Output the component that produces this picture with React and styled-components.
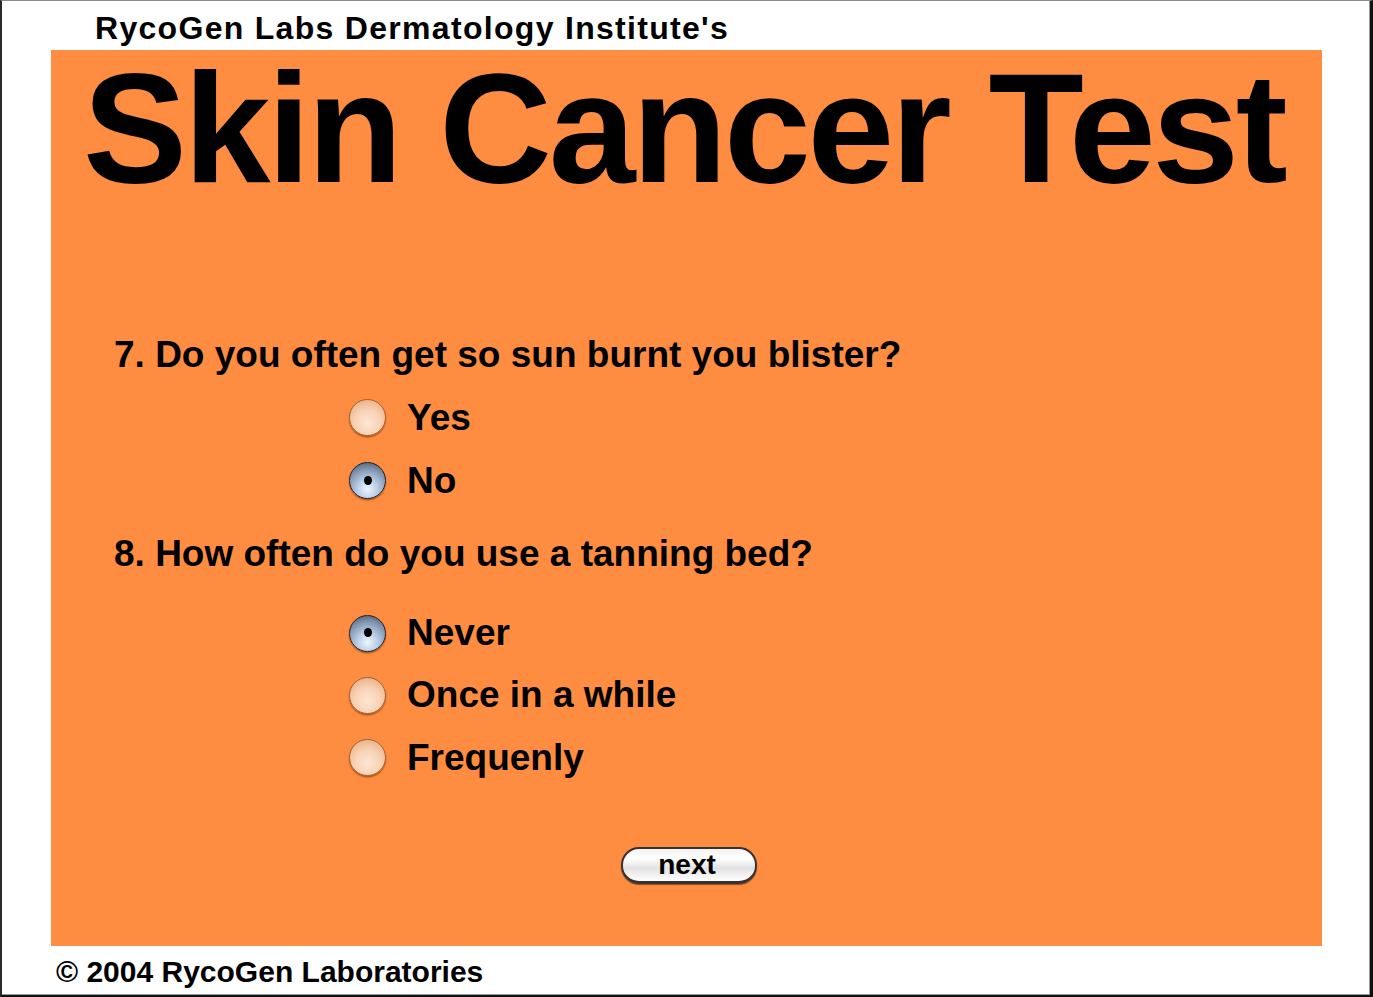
import React from "react";
import styled, { createGlobalStyle } from "styled-components";

const Global = createGlobalStyle`
  html, body { margin: 0; padding: 0; background: #fff; }
  body { font-family: "Liberation Sans", Arial, Helvetica, sans-serif; }
`;

const Frame = styled.div`
  box-sizing: border-box;
  width: 1373px;
  height: 997px;
  border-left: 2px solid #2a2a2a;
  border-top: 1px solid #8a8a8a;
  border-right: 3px solid #111;
  border-bottom: 2px solid #111;
  box-shadow: inset -1px -1px 0 #9a9a9a;
  display: flex;
  flex-direction: column;
  background: #fff;
`;

const Header = styled.div`
  box-sizing: border-box;
  height: 49px;
  padding: 0 0 6px 93px;
  display: flex;
  align-items: flex-end;
  font-weight: bold;
  font-size: 32px;
  line-height: 32px;
  color: #000;
  white-space: nowrap;
  letter-spacing: 1.3px;
`;

const Panel = styled.div`
  margin-left: 49px;
  width: 1271px;
  height: 896px;
  background: #fe8d41;
  display: flex;
  flex-direction: column;
`;

const Title = styled.h1`
  margin: 0;
  padding-left: 32px;
  font-size: 156px;
  line-height: 156px;
  font-weight: bold;
  letter-spacing: -3.3px;
  color: #000;
  white-space: nowrap;
`;

const Question = styled.div`
  margin-top: ${(p) => p.$top}px;
  padding-left: 63px;
  font-size: 37px;
  line-height: 40px;
  font-weight: bold;
  color: #000;
  white-space: nowrap;
`;

const Options = styled.div`
  margin-top: ${(p) => p.$top}px;
  padding-left: 298px;
  display: flex;
  flex-direction: column;
`;

const OptionRow = styled.label`
  height: ${(p) => p.$h}px;
  display: flex;
  align-items: center;
  gap: 21px;
  font-size: 37px;
  font-weight: bold;
  color: #000;
`;

const RadioDot = styled.span`
  box-sizing: border-box;
  width: 37px;
  height: 37px;
  border-radius: 50%;
  flex-shrink: 0;
  position: relative;
  border: 1.5px solid ${(p) => (p.$checked ? "#20242e" : "#a8612f")};
  background: ${(p) =>
    p.$checked
      ? "radial-gradient(circle at 50% 75%, #eef6ff 0%, #bcd0e8 30%, #8195b0 65%, #3e4658 100%)"
      : "radial-gradient(circle at 50% 65%, #fde6d4 0%, #f8d2b5 45%, #eab48b 80%, #b97344 100%)"};
  box-shadow: 0 1.5px 1.5px rgba(90, 40, 0, 0.55);
  &::after {
    content: "";
    display: ${(p) => (p.$checked ? "block" : "none")};
    position: absolute;
    left: 50%;
    top: 50%;
    width: 8px;
    height: 9px;
    margin: -5px 0 0 -4px;
    border-radius: 50%;
    background: #000;
  }
`;

const ButtonRow = styled.div`
  margin-top: ${(p) => p.$top}px;
  display: flex;
  padding-left: 570px;
`;

const NextButton = styled.button`
  box-sizing: border-box;
  width: 136px;
  height: 37px;
  border-radius: 18px;
  border: 2px solid #3a3230;
  border-bottom-width: 3px;
  background: linear-gradient(#f2f2f2 0%, #ffffff 30%, #e2e2e2 60%, #ffffff 100%);
  box-shadow: 0 1px 1px rgba(80, 30, 0, 0.6);
  font-family: "Liberation Sans", Arial, sans-serif;
  font-weight: bold;
  font-size: 28px;
  line-height: 30px;
  color: #000;
  padding: 0 4px 0 0;
  cursor: pointer;
`;

const Footer = styled.div`
  padding-left: 54px;
  padding-top: 8px;
  font-size: 30px;
  font-weight: bold;
  line-height: 36px;
  color: #000;
  white-space: nowrap;
`;

function Option({ label, checked, h = 63 }) {
  return (
    <OptionRow $h={h}>
      <RadioDot $checked={checked} />
      <span>{label}</span>
    </OptionRow>
  );
}

export default function App() {
  return (
    <>
      <Global />
      <Frame>
        <Header>RycoGen Labs Dermatology Institute's</Header>
        <Panel>
          <Title>Skin Cancer Test</Title>
          <Question $top={129}>7. Do you often get so sun burnt you blister?</Question>
          <Options $top={11}>
            <Option label="Yes" />
            <Option label="No" checked />
          </Options>
          <Question $top={22}>8. How often do you use a tanning bed?</Question>
          <Options $top={28}>
            <Option label="Never" checked h={62} />
            <Option label="Once in a while" h={62} />
            <Option label="Frequenly" h={63} />
          </Options>
          <ButtonRow $top={58}>
            <NextButton>next</NextButton>
          </ButtonRow>
        </Panel>
        <Footer>© 2004 RycoGen Laboratories</Footer>
      </Frame>
    </>
  );
}
